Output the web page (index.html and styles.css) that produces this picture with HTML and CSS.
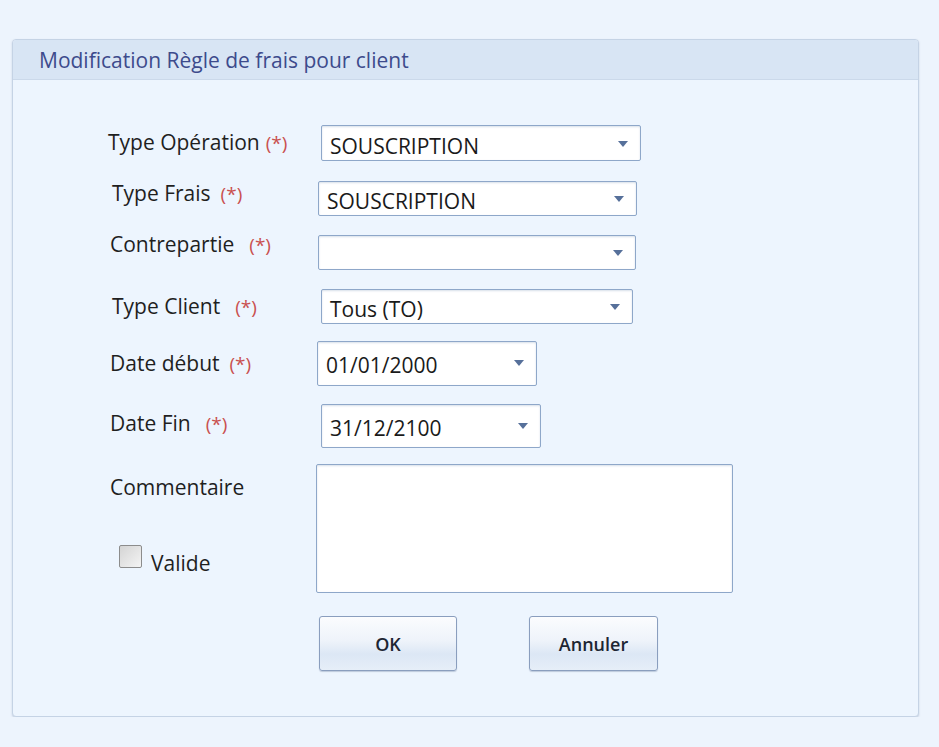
FILE: index.html
```html
<!DOCTYPE html>
<html lang="fr">
<head>
    <meta charset="UTF-8">
    <meta name="viewport" content="width=device-width, initial-scale=1.0">
    <title>Modification Règle de frais pour client</title>
    <link rel="stylesheet" href="styles.css">
</head>
<body>
    <div class="panel">
        <div class="panel-header">Modification Règle de frais pour client</div>
        <div class="panel-body">
            <div class="row row-op">
                <div class="lbl">Type Opération<span class="req req-tight">(*)</span></div>
                <div class="combo combo-op">
                    <span>SOUSCRIPTION</span>
                    <svg class="arrow" width="10" height="6" viewBox="0 0 10 6"><path d="M0 0H10L5 6Z"/></svg>
                </div>
            </div>
            <div class="row row-frais">
                <div class="lbl">Type Frais<span class="req">(*)</span></div>
                <div class="combo combo-frais">
                    <span>SOUSCRIPTION</span>
                    <svg class="arrow" width="10" height="6" viewBox="0 0 10 6"><path d="M0 0H10L5 6Z"/></svg>
                </div>
            </div>
            <div class="row row-contre">
                <div class="lbl">Contrepartie<span class="req req-wide">(*)</span></div>
                <div class="combo combo-contre">
                    <span></span>
                    <svg class="arrow" width="10" height="6" viewBox="0 0 10 6"><path d="M0 0H10L5 6Z"/></svg>
                </div>
            </div>
            <div class="row row-client">
                <div class="lbl">Type Client<span class="req req-wide">(*)</span></div>
                <div class="combo combo-client">
                    <span>Tous (TO)</span>
                    <svg class="arrow" width="10" height="6" viewBox="0 0 10 6"><path d="M0 0H10L5 6Z"/></svg>
                </div>
            </div>
            <div class="row row-debut">
                <div class="lbl">Date début<span class="req">(*)</span></div>
                <div class="combo date date-debut">
                    <span>01/01/2000</span>
                    <svg class="arrow" width="10" height="6" viewBox="0 0 10 6"><path d="M0 0H10L5 6Z"/></svg>
                </div>
            </div>
            <div class="row row-fin">
                <div class="lbl">Date Fin<span class="req req-wide">(*)</span></div>
                <div class="combo date date-fin">
                    <span>31/12/2100</span>
                    <svg class="arrow" width="10" height="6" viewBox="0 0 10 6"><path d="M0 0H10L5 6Z"/></svg>
                </div>
            </div>
            <div class="row row-comment">
                <div class="left-col">
                    <div class="lbl">Commentaire</div>
                    <label class="check">
                        <span class="check-box"></span>
                        <span class="check-text">Valide</span>
                    </label>
                </div>
                <textarea class="comment"></textarea>
            </div>
            <div class="buttons">
                <button class="btn btn-ok">OK</button>
                <button class="btn btn-cancel">Annuler</button>
            </div>
        </div>
    </div>
</body>
</html>
```

FILE: styles.css
```css
body {
    font-family: 'Open Sans', 'Noto Sans', sans-serif;
    background-color: #edf4fd;
    margin: 0;
    padding: 0;
    color: #1f1f1f;
}
.panel {
    margin: 39px 0 0 12px;
    width: 905px;
    height: 676px;
    border: 1px solid #c5d3e5;
    border-radius: 4px;
    background-color: #edf5fe;
    box-shadow: 0 1px 2px rgba(120, 140, 170, 0.35);
    overflow: hidden;
}
.panel-header {
    height: 39px;
    line-height: 40px;
    padding-left: 26px;
    background-color: #d8e5f4;
    border-bottom: 1px solid #cbd9ea;
    color: #3d4b8c;
    font-size: 21px;
}
.panel-body {
    padding: 45px 0 0 97px;
}
.row {
    display: flex;
    align-items: flex-start;
}
.lbl {
    width: 208px;
    font-size: 21px;
    line-height: 28px;
    white-space: nowrap;
}
.req {
    color: #c9504f;
    font-size: 19px;
    margin-left: 10px;
}
.req-tight {
    margin-left: 6px;
}
.req-wide {
    margin-left: 15px;
}
.combo {
    display: flex;
    align-items: center;
    justify-content: space-between;
    box-sizing: border-box;
    height: 35px;
    padding: 5px 12px 0 8px;
    background-color: #fff;
    border: 1px solid #8ea7c9;
    border-radius: 2px;
    box-shadow: inset 0 1px 2px rgba(100, 130, 170, 0.25);
    font-size: 21px;
    color: #1a1a1a;
}
.arrow {
    fill: #56709a;
    flex-shrink: 0;
    margin-top: -4px;
}
.row-op .lbl { padding-top: 3px; margin-left: -2px; }
.combo-op { width: 320px; height: 36px; margin-left: 5px; }
.row-frais { margin-top: 20px; }
.row-frais .lbl { margin-top: -2px; margin-left: 2px; }
.combo-frais { width: 319px; margin-left: -2px; }
.row-contre { margin-top: 19px; }
.row-contre .lbl { margin-top: -5px; }
.combo-contre { width: 318px; }
.row-client { margin-top: 19px; }
.row-client .lbl { padding-top: 3px; margin-left: 2px; }
.combo-client { width: 312px; margin-left: 1px; }
.row-debut { margin-top: 17px; }
.row-debut .lbl { padding-top: 8px; }
.date { height: 45px; width: 220px; padding-top: 3px; }
.date-debut { margin-left: -1px; }
.row-fin { margin-top: 18px; }
.row-fin .lbl { padding-top: 5px; }
.date-fin { height: 44px; margin-left: 3px; }
.row-comment { margin-top: 16px; }
.left-col {
    width: 206px;
    padding-top: 9px;
}
.check {
    display: flex;
    align-items: flex-end;
    margin: 44px 0 0 9px;
}
.check-box {
    width: 21px;
    height: 21px;
    border: 1px solid #8c8c8c;
    border-radius: 2px;
    background: linear-gradient(135deg, #d4d4d4, #f4f4f4);
}
.check-text {
    font-size: 21px;
    line-height: 22px;
    margin-left: 9px;
    margin-bottom: -6px;
}
.comment {
    width: 417px;
    height: 129px;
    box-sizing: border-box;
    margin: 0;
    background-color: #fff;
    border: 1px solid #8ea7c9;
    border-radius: 2px;
    box-shadow: inset 0 1px 2px rgba(100, 130, 170, 0.25);
    resize: none;
}
.buttons {
    display: flex;
    gap: 72px;
    margin: 23px 0 0 209px;
}
.btn {
    height: 55px;
    border: 1px solid #8a9ebe;
    border-radius: 3px;
    background: linear-gradient(#fbfcfe 0%, #eef3fa 45%, #dce7f5 70%, #e6eef8 100%);
    box-shadow: 0 1px 1px rgba(120, 140, 170, 0.4);
    font-family: 'Open Sans', sans-serif;
    font-size: 18px;
    font-weight: 600;
    color: #1d2633;
    cursor: pointer;
}
.btn-ok { width: 138px; }
.btn-cancel { width: 129px; }
```
